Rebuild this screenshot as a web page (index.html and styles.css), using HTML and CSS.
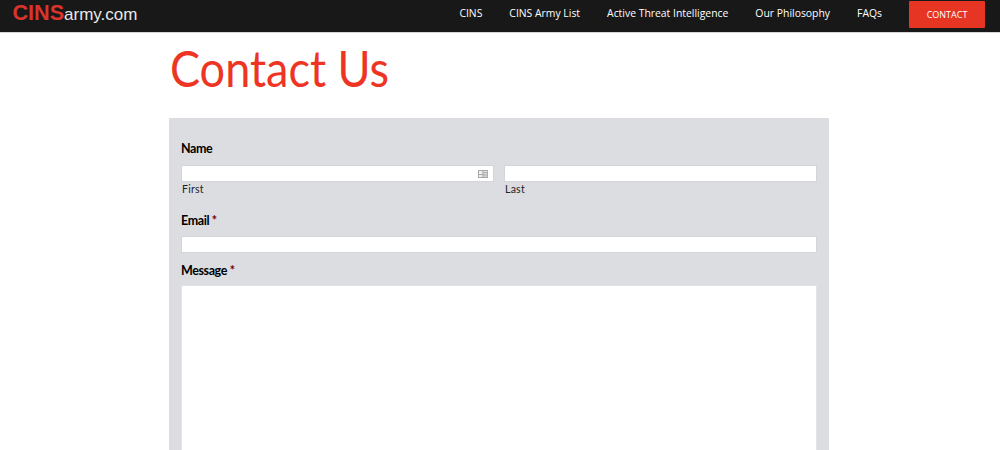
FILE: index.html
```html
<!DOCTYPE html>
<html lang="en">
<head>
<meta charset="utf-8">
<title>Contact Us - CINSarmy.com</title>
<link rel="stylesheet" href="styles.css">
</head>
<body>
<header class="site-header">
  <a class="logo" href="#"><span class="logo-red">CINS</span><span class="logo-white">army.com</span></a>
  <nav class="nav">
    <a class="nav-link" href="#">CINS</a>
    <a class="nav-link" href="#">CINS Army List</a>
    <a class="nav-link" href="#">Active Threat Intelligence</a>
    <a class="nav-link" href="#">Our Philosophy</a>
    <a class="nav-link" href="#">FAQs</a>
    <a class="nav-button" href="#">CONTACT</a>
  </nav>
</header>
<main class="content">
  <h1 class="page-title">Contact Us</h1>
  <form class="contact-form">
    <div class="field field-name">
      <div class="label">Name</div>
      <div class="name-row">
        <div class="name-col">
          <div class="input input-icon">
            <svg class="card-icon" width="10" height="8" viewBox="0 0 10 8" aria-hidden="true">
              <rect x="0" y="0" width="10" height="8" fill="#a8a8a8"/>
              <rect x="1" y="1" width="3.4" height="3" fill="#efefef"/>
              <rect x="1" y="5" width="3.4" height="2" fill="#efefef"/>
              <rect x="5.4" y="1.2" width="3.8" height="1" fill="#efefef"/>
              <rect x="5.4" y="3.4" width="3.8" height="1" fill="#efefef"/>
              <rect x="5.4" y="5.6" width="3.8" height="1" fill="#efefef"/>
            </svg>
          </div>
          <div class="sublabel">First</div>
        </div>
        <div class="name-col">
          <div class="input"></div>
          <div class="sublabel">Last</div>
        </div>
      </div>
    </div>
    <div class="field field-email">
      <div class="label">Email <span class="required">*</span></div>
      <div class="input"></div>
    </div>
    <div class="field">
      <div class="label">Message <span class="required">*</span></div>
      <div class="textarea"></div>
    </div>
  </form>
</main>
</body>
</html>
```

FILE: styles.css
```css
html, body {
  margin: 0;
  padding: 0;
  height: 450px;
  overflow: hidden;
  background: #fff;
}
body {
  font-family: "Lato", "Noto Sans", sans-serif;
  color: #000;
}
.site-header {
  height: 32px;
  background: #181818;
  border-bottom: 1px solid #d4d4d4;
  display: flex;
  align-items: flex-start;
  justify-content: space-between;
  padding: 0 15px 0 12.5px;
}
.logo {
  font-family: "Liberation Sans", Arial, sans-serif;
  text-decoration: none;
  display: flex;
  align-items: baseline;
  line-height: 25px;
}
.logo-red {
  color: #d9342b;
  font-weight: 700;
  font-size: 21.6px;
}
.logo-white {
  color: #e8e8e8;
  font-size: 17px;
}
.nav {
  display: flex;
  align-items: flex-start;
  padding-top: 1px;
}
.nav-link {
  font-family: "Open Sans", "Noto Sans", sans-serif;
  font-size: 10.4px;
  line-height: 24px;
  color: #fff;
  text-decoration: none;
  margin-right: 27px;
}
.nav-button {
  font-family: "Open Sans", "Noto Sans", sans-serif;
  font-size: 9px;
  color: #fff;
  background: #e63522;
  text-decoration: none;
  width: 76px;
  height: 27px;
  box-sizing: border-box;
  padding-bottom: 1px;
  display: flex;
  align-items: center;
  justify-content: center;
  border-radius: 1px;
}
.content {
  width: 660px;
  margin-left: 169px;
}
.page-title {
  font-weight: 400;
  font-size: 50px;
  line-height: 60px;
  color: #ee3524;
  margin: 5px 0 20px 1px;
  transform: scaleX(0.9);
  transform-origin: left center;
}
.contact-form {
  background: #dcddE1;
  padding: 20px 12px 0;
  height: 400px;
}
.label {
  font-size: 12.5px;
  font-weight: 700;
  letter-spacing: -0.4px;
  line-height: 22px;
  color: #000;
}
.required {
  color: #790000;
}
.field-name {
  margin-bottom: 13px;
}
.field-email {
  margin-bottom: 7px;
}
.name-row {
  display: grid;
  grid-template-columns: 1fr 1fr;
  column-gap: 10px;
  margin-top: 5px;
}
.input {
  height: 15px;
  background: #fff;
  border: 1px solid #d4d5d9;
  display: flex;
  align-items: center;
  justify-content: flex-end;
}
.field-email .input {
  margin-top: 4px;
}
.card-icon {
  margin-right: 5px;
}
.sublabel {
  font-size: 10.5px;
  line-height: 14px;
  letter-spacing: 0.25px;
  color: #222;
  margin: 0 0 1px 1px;
}
.textarea {
  height: 300px;
  background: #fff;
  border: 1px solid #e2e3e6;
  margin-top: 3px;
}
```
